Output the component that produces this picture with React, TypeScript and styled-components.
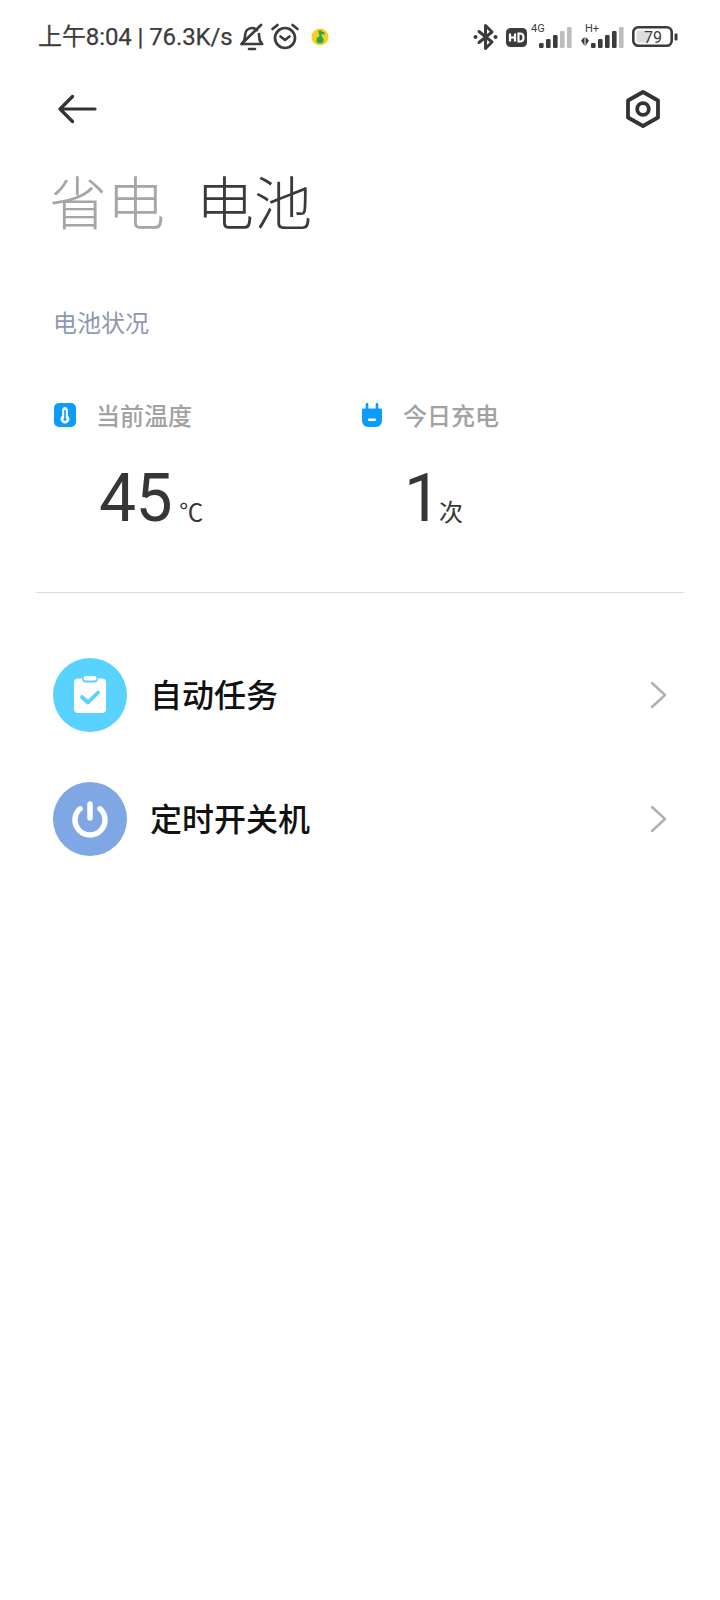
import styled, { createGlobalStyle } from 'styled-components';

const GlobalStyle = createGlobalStyle`
  html, body { margin: 0; padding: 0; background: #fff; }
  body { font-family: Roboto, "Noto Sans CJK SC", sans-serif; }
`;

const Page = styled.div`
  width: 720px;
  height: 1600px;
  overflow: hidden;
  background: #fff;
`;

const StatusBar = styled.div`
  height: 74px;
  padding: 0 42px 0 38px;
  box-sizing: border-box;
  display: flex;
  align-items: center;
  justify-content: space-between;
  color: #3c3c3c;
`;

const StatusGroup = styled.div`
  display: flex;
  align-items: center;
`;

const StatusText = styled.span`
  font-family: Roboto, "Noto Sans CJK SC", sans-serif;
  font-size: 24px;
  font-weight: 400;
  letter-spacing: -0.1px;
  -webkit-text-stroke: 0.25px #3c3c3c;
  white-space: nowrap;
  line-height: 28px;
`;

const StatusIcon = styled.svg<{ $left?: number }>`
  display: block;
  flex: none;
  margin-left: ${(p) => p.$left ?? 0}px;
`;

const Toolbar = styled.div`
  height: 70px;
  padding: 0 60px 0 58px;
  display: flex;
  align-items: center;
  justify-content: space-between;
`;

const Tabs = styled.div`
  display: flex;
  gap: 31px;
  padding: 16px 0 0 49px;
`;

const Tab = styled.div<{ $active?: boolean }>`
  font-family: "Noto Sans CJK SC", sans-serif;
  font-size: 58px;
  font-weight: 300;
  line-height: 80px;
  color: ${(p) => (p.$active ? '#3a3a3a' : '#a6a6a6')};
`;

const SectionLabel = styled.div`
  font-family: "Noto Sans CJK SC", sans-serif;
  font-size: 24px;
  font-weight: 400;
  line-height: 34px;
  color: #8f98b2;
  padding: 65px 0 0 53px;
`;

const Stats = styled.div`
  display: grid;
  grid-template-columns: 307px 1fr;
  padding: 59px 0 0 54px;
`;

const StatHead = styled.div`
  display: flex;
  align-items: center;
  gap: 20px;
`;

const StatLabel = styled.span`
  font-family: "Noto Sans CJK SC", sans-serif;
  font-size: 24px;
  font-weight: 500;
  line-height: 34px;
  color: #a2a2a2;
`;

const StatValue = styled.div`
  display: flex;
  align-items: baseline;
  padding: 27px 0 0 45px;
  color: #363636;
`;

const Number = styled.span<{ $narrow?: boolean }>`
  font-family: Roboto, sans-serif;
  font-size: 66px;
  font-weight: 400;
  letter-spacing: ${(p) => (p.$narrow ? '-7px' : '-0.5px')};
  margin-left: ${(p) => (p.$narrow ? '-2px' : '0')};
  line-height: 80px;
`;

const Unit = styled.span<{ $gap: number }>`
  font-family: "Noto Sans CJK SC", sans-serif;
  font-size: 24px;
  margin-left: ${(p) => p.$gap}px;
`;

const Divider = styled.div`
  height: 1px;
  background: #dcdcdc;
  margin: 53px 36px 0;
`;

const Menu = styled.div`
  padding: 65px 53px 0 53px;
  display: flex;
  flex-direction: column;
  gap: 50px;
`;

const MenuRow = styled.div`
  display: flex;
  align-items: center;
  height: 74px;
`;

const Badge = styled.div<{ $color: string }>`
  width: 74px;
  height: 74px;
  border-radius: 50%;
  background: ${(p) => p.$color};
  display: flex;
  align-items: center;
  justify-content: center;
  flex: none;
`;

const MenuLabel = styled.span`
  flex: 1;
  margin-left: 23px;
  padding-bottom: 4px;
  font-family: "Noto Sans CJK SC", sans-serif;
  font-size: 32px;
  font-weight: 500;
  color: #111;
`;

function Signal({ lit }: { lit: number }) {
  const heights = [5, 9, 13, 17, 21];
  return (
    <>
      {heights.map((h, i) => (
        <rect
          key={h}
          x={i * 7}
          y={21 - h}
          width={4.6}
          height={h}
          rx={1.2}
          fill={i < lit ? '#3c3c3c' : '#bdbdbd'}
        />
      ))}
    </>
  );
}

function Chevron() {
  return (
    <StatusIcon width="17" height="28" viewBox="0 0 17 28" fill="none" stroke="#b0b0b0" strokeWidth="2.400" strokeLinecap="round" strokeLinejoin="round">
      <path d="M2 2l13 12L2 26" />
    </StatusIcon>
  );
}

export default function App() {
  return (
    <Page>
      <GlobalStyle />
      <StatusBar>
        <StatusGroup>
          <StatusText>上午8:04 | 76.3K/s</StatusText>
          <StatusIcon $left={6} width="26" height="28" viewBox="0 0 26 28" fill="none" stroke="#3c3c3c" strokeWidth="2.600" strokeLinecap="round" strokeLinejoin="round">
            <path d="M3 21c2-2 3-4 3-8 0-5 3-8 7-8 2 0 4 .8 5 2.200M20 11c0 1 .2 2 .2 3 0 3 1.300 5.500 3 7H3" />
            <path d="M10 26h6" />
            <path d="M2.500 21 22 2" />
          </StatusIcon>
          <StatusIcon $left={5} width="30" height="30" viewBox="0 0 30 30" fill="none" stroke="#3c3c3c" strokeWidth="2.700" strokeLinecap="round" strokeLinejoin="round">
            <circle cx="15" cy="16" r="10" />
            <path d="M10.500 14.500 15 18l4.500-3.500" />
            <path d="M2.500 7 7.500 3M27.500 7l-5-4" />
          </StatusIcon>
          <StatusIcon $left={11} width="18" height="18" viewBox="0 0 18 18">
            <circle cx="9" cy="9" r="8.500" fill="#f4d21f" />
            <path d="M8.500 2.500 10 10" stroke="#2fa552" strokeWidth="2.400" fill="none" />
            <path d="M8.500 3c1.500 2 3.500 2.500 5 2.500" stroke="#2fa552" strokeWidth="2.400" fill="none" />
            <circle cx="9" cy="12" r="3.600" fill="#2fa552" />
          </StatusIcon>
        </StatusGroup>
        <StatusGroup>
          <StatusIcon width="25" height="28" viewBox="0 0 25 28" fill="none" stroke="#3c3c3c" strokeWidth="3" strokeLinejoin="round" strokeLinecap="round">
            <path d="M6 8.500 19 19l-6.500 6.500v-23L19 9 6 19.500" />
            <circle cx="2.500" cy="14" r="2" fill="#3c3c3c" stroke="none" />
            <circle cx="22.500" cy="14" r="2" fill="#3c3c3c" stroke="none" />
          </StatusIcon>
          <StatusIcon $left={8} width="21" height="19" viewBox="0 0 21 19">
            <rect width="21" height="19" rx="4.500" fill="#3c3c3c" />
            <path d="M4 5.500v8M9 5.500v8M4 9.500h5" stroke="#fff" strokeWidth="2.200" fill="none" />
            <path d="M12.500 5.500v8h1.500c2 0 3.500-1.500 3.500-4s-1.500-4-3.500-4z" stroke="#fff" strokeWidth="2.200" fill="none" />
          </StatusIcon>
          <StatusIcon $left={3} width="42" height="28" viewBox="0 0 42 28">
            <text x="1" y="9" fontFamily="Roboto, sans-serif" fontSize="11" fill="#3c3c3c">4G</text>
            <g transform="translate(9 4)"><Signal lit={3} /></g>
          </StatusIcon>
          <StatusIcon $left={9} width="46" height="28" viewBox="0 0 46 28">
            <text x="4" y="9" fontFamily="Roboto, sans-serif" fontSize="11" fill="#3c3c3c">H+</text>
            <path d="M0 17.500l3.500-3.500v9zM8 17.500 4.500 14v9z" fill="#3c3c3c" />
            <g transform="translate(10 4)"><Signal lit={4} /></g>
          </StatusIcon>
          <StatusIcon $left={5} width="46" height="22" viewBox="0 0 46 22">
            <rect x="1.300" y="1.300" width="38.400" height="18.400" rx="5" fill="none" stroke="#3c3c3c" strokeWidth="2.600" />
            <rect x="4.500" y="4.500" width="13" height="12" rx="1.500" fill="#dcdcdc" />
            <text x="21" y="16.500" textAnchor="middle" fontFamily="Roboto, sans-serif" fontSize="16" fill="#3c3c3c">79</text>
            <rect x="42.500" y="7.500" width="3" height="7" rx="1" fill="#3c3c3c" />
          </StatusIcon>
        </StatusGroup>
      </StatusBar>

      <Toolbar>
        <StatusIcon width="39" height="30" viewBox="0 0 39 30" fill="none" stroke="#333" strokeWidth="3.200" strokeLinecap="round" strokeLinejoin="round">
          <path d="M37 15H2M14.500 2.500 2 15l12.500 12.500" />
        </StatusIcon>
        <StatusIcon width="34" height="38" viewBox="0 0 34 38" fill="none" stroke="#333" strokeWidth="3.800" strokeLinejoin="round">
          <path d="M17 2 32 10.500v17L17 36 2 27.500v-17z" />
          <circle cx="17" cy="19" r="5.800" />
        </StatusIcon>
      </Toolbar>

      <Tabs>
        <Tab>省电</Tab>
        <Tab $active>电池</Tab>
      </Tabs>

      <SectionLabel>电池状况</SectionLabel>

      <Stats>
        <div>
          <StatHead>
            <StatusIcon width="22" height="24" viewBox="0 0 22 24">
              <rect width="22" height="24" rx="5" fill="#0c9dfb" />
              <path d="M11 4.500a2.300 2.300 0 0 0-2.300 2.300v6a4 4 0 1 0 4.600 0v-6A2.300 2.300 0 0 0 11 4.500z" fill="#fff" stroke="#fff" strokeWidth="1" />
              <circle cx="11" cy="16.300" r="1.500" fill="#0c9dfb" />
              <rect x="10.200" y="7" width="1.600" height="8" fill="#0c9dfb" />
            </StatusIcon>
            <StatLabel>当前温度</StatLabel>
          </StatHead>
          <StatValue>
            <Number>45</Number>
            <Unit $gap={7}>℃</Unit>
          </StatValue>
        </div>
        <div>
          <StatHead>
            <StatusIcon width="22" height="24" viewBox="0 0 22 24">
              <path d="M6 1v6M16 1v6" stroke="#0c9dfb" strokeWidth="2.600" strokeLinecap="round" />
              <path d="M2 5.500h18a1 1 0 0 1 1 1V18a6 6 0 0 1-6 6H7a6 6 0 0 1-6-6V6.500a1 1 0 0 1 1-1z" fill="#0c9dfb" />
              <rect x="7" y="15.500" width="8" height="2.400" rx="1" fill="#fff" />
            </StatusIcon>
            <StatLabel>今日充电</StatLabel>
          </StatHead>
          <StatValue>
            <Number $narrow>1</Number>
            <Unit $gap={5}>次</Unit>
          </StatValue>
        </div>
      </Stats>

      <Divider />

      <Menu>
        <MenuRow>
          <Badge $color="#59d2ff">
            <StatusIcon width="34" height="38" viewBox="0 0 34 38">
              <path d="M9 2.500H5a4 4 0 0 0-4 4V33a4 4 0 0 0 4 4h24a4 4 0 0 0 4-4V6.500a4 4 0 0 0-4-4h-4a4 4 0 0 1-4 4h-8a4 4 0 0 1-4-4z" fill="#fff" />
              <rect x="10.500" y="0" width="13" height="4.500" rx="2.250" fill="#fff" />
              <path d="M9 21l6 5.500L25 16.500" fill="none" stroke="#59d2ff" strokeWidth="3.800" strokeLinecap="round" strokeLinejoin="round" />
            </StatusIcon>
          </Badge>
          <MenuLabel>自动任务</MenuLabel>
          <Chevron />
        </MenuRow>
        <MenuRow>
          <Badge $color="#7fa7e3">
            <StatusIcon width="38" height="38" viewBox="0 0 38 38" fill="none" stroke="#fff" strokeWidth="5.500" strokeLinecap="round">
              <path d="M9 8.800a15 15 0 1 0 20 0" />
              <path d="M19 4v14" />
            </StatusIcon>
          </Badge>
          <MenuLabel>定时开关机</MenuLabel>
          <Chevron />
        </MenuRow>
      </Menu>
    </Page>
  );
}
